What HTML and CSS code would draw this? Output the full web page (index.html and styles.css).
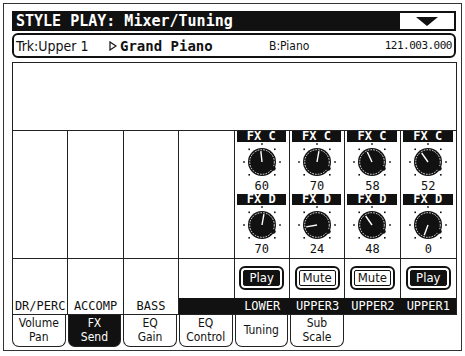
FILE: index.html
```html
<!DOCTYPE html>
<html lang="en">
  <head>
    <meta charset="UTF-8" />
    <meta name="viewport" content="width=device-width, initial-scale=1.0" />
    <title>Style Play: Mixer/Tuning</title>
    <link rel="stylesheet" href="styles.css">
  </head>
  <body>
    <!-- shared knob body -->
    <svg class="defs" width="0" height="0">
      <symbol id="knob" viewBox="0 0 42 38">
        <g fill="#111">
          <rect x="20.2" y="1.2" width="1.6" height="1.6" />
          <rect x="33.0" y="6.5" width="1.6" height="1.6" />
          <rect x="38.2" y="19.2" width="1.6" height="1.6" />
          <rect x="33.0" y="32.0" width="1.6" height="1.6" />
          <rect x="7.4" y="6.5" width="1.6" height="1.6" />
          <rect x="2.2" y="19.2" width="1.6" height="1.6" />
          <rect x="7.4" y="32.0" width="1.6" height="1.6" />
        </g>
        <circle cx="21" cy="20" r="14" fill="#111" />
        <circle cx="21" cy="20" r="12.3" fill="none" stroke="#fff" stroke-width="0.9" stroke-dasharray="1.6 1.2" />
        <circle cx="32.5" cy="26.5" r="2.2" fill="#111" />
      </symbol>
    </svg>

    <div class="frame">
      <!-- Title bar -->
      <div class="title-row">
        <div class="title">STYLE PLAY: Mixer/Tuning</div>
        <div class="menu-btn"><span class="arrow"></span></div>
      </div>

      <!-- Track info -->
      <div class="track">
        <span class="trk">Trk:Upper 1</span>
        <span class="sound">
          <svg class="play-mark" width="8" height="10" viewBox="0 0 8 10">
            <path d="M1 1 L7 5 L1 9 Z" fill="none" stroke="#111" stroke-width="1.2" />
          </svg>Grand Piano</span>
        <span class="bank">B:Piano</span>
        <span class="prog">121.003.000</span>
      </div>

      <!-- Mixer -->
      <div class="mixer">
        <div class="blank"></div>
        <div class="channels">
          <div class="ch"></div>
          <div class="ch"></div>
          <div class="ch"></div>
          <div class="ch"></div>
          <div class="ch">
            <div class="fx">FX C</div>
            <svg class="knob" viewBox="0 0 42 38"><use href="#knob" /><line x1="21" y1="20" x2="21" y2="9" transform="rotate(-6 21 20)" /></svg>
            <div class="val">60</div>
            <div class="fx">FX D</div>
            <svg class="knob" viewBox="0 0 42 38"><use href="#knob" /><line x1="21" y1="20" x2="21" y2="9" transform="rotate(10 21 20)" /></svg>
            <div class="val">70</div>
          </div>
          <div class="ch">
            <div class="fx">FX C</div>
            <svg class="knob" viewBox="0 0 42 38"><use href="#knob" /><line x1="21" y1="20" x2="21" y2="9" transform="rotate(10 21 20)" /></svg>
            <div class="val">70</div>
            <div class="fx">FX D</div>
            <svg class="knob" viewBox="0 0 42 38"><use href="#knob" /><line x1="21" y1="20" x2="21" y2="9" transform="rotate(-100 21 20)" /></svg>
            <div class="val">24</div>
          </div>
          <div class="ch">
            <div class="fx">FX C</div>
            <svg class="knob" viewBox="0 0 42 38"><use href="#knob" /><line x1="21" y1="20" x2="21" y2="9" transform="rotate(-25 21 20)" /></svg>
            <div class="val">58</div>
            <div class="fx">FX D</div>
            <svg class="knob" viewBox="0 0 42 38"><use href="#knob" /><line x1="21" y1="20" x2="21" y2="9" transform="rotate(-35 21 20)" /></svg>
            <div class="val">48</div>
          </div>
          <div class="ch last">
            <div class="fx">FX C</div>
            <svg class="knob" viewBox="0 0 42 38"><use href="#knob" /><line x1="21" y1="20" x2="21" y2="9" transform="rotate(-35 21 20)" /></svg>
            <div class="val">52</div>
            <div class="fx">FX D</div>
            <svg class="knob" viewBox="0 0 42 38"><use href="#knob" /><line x1="21" y1="20" x2="21" y2="9" transform="rotate(-160 21 20)" /></svg>
            <div class="val">0</div>
          </div>

          <!-- play / mute row -->
          <div class="btn-cell"></div>
          <div class="btn-cell"></div>
          <div class="btn-cell"></div>
          <div class="btn-cell"></div>
          <div class="btn-cell"><div class="pm play"><span>Play</span></div></div>
          <div class="btn-cell"><div class="pm mute"><span>Mute</span></div></div>
          <div class="btn-cell"><div class="pm mute"><span>Mute</span></div></div>
          <div class="btn-cell last"><div class="pm play"><span>Play</span></div></div>

          <!-- channel names -->
          <div class="name">DR/PERC</div>
          <div class="name">ACCOMP</div>
          <div class="name">BASS</div>
          <div class="name dark"></div>
          <div class="name dark">LOWER</div>
          <div class="name dark">UPPER3</div>
          <div class="name dark">UPPER2</div>
          <div class="name dark">UPPER1</div>
        </div>
      </div>

      <!-- Page tabs -->
      <div class="tabs">
        <div class="tab">Volume<br>Pan</div>
        <div class="tab active">FX<br>Send</div>
        <div class="tab">EQ<br>Gain</div>
        <div class="tab">EQ<br>Control</div>
        <div class="tab single">Tuning</div>
        <div class="tab">Sub<br>Scale</div>
      </div>
    </div>
  </body>
</html>
```

FILE: styles.css
```css
body {
  margin: 0;
  background: #fff;
  color: #111;
  font-family: "DejaVu Sans Condensed", "Liberation Sans Narrow", "Liberation Sans", sans-serif;
}

.defs {
  position: absolute;
  width: 0;
  height: 0;
}

/* Outer display frame */
.frame {
  box-sizing: border-box;
  width: 459px;
  height: 348px;
  margin: 3px 0 0 3px;
  padding: 7px 4px 0 8px;
  border: 1px solid #333;
}

/* Title bar */
.title-row {
  display: flex;
  height: 20px;
}
.title {
  flex: 1;
  background: #111;
  color: #fff;
  font-family: "DejaVu Sans Mono", monospace;
  font-weight: bold;
  font-size: 15px;
  line-height: 20px;
  padding-left: 4px;
}
.menu-btn {
  box-sizing: border-box;
  width: 58px;
  margin-right: 1px;
  border: 2px solid #111;
  display: flex;
  align-items: center;
  justify-content: center;
}
.arrow {
  width: 0;
  height: 0;
  border-left: 11px solid transparent;
  border-right: 11px solid transparent;
  border-top: 9px solid #111;
}

/* Track info row */
.track {
  box-sizing: border-box;
  display: flex;
  align-items: center;
  height: 25px;
  margin: 2px 1px 0 0;
  padding: 0 2px 0 2px;
  border: 2px solid #111;
  border-radius: 6px;
}
.trk {
  flex: 0 0 93px;
  font-size: 14px;
}
.sound {
  flex: 0 0 160px;
  display: flex;
  align-items: center;
  font-family: "DejaVu Sans Mono", monospace;
  font-weight: bold;
  font-size: 14px;
}
.play-mark {
  margin-right: 3px;
}
.bank {
  flex: 1;
  font-size: 12px;
}
.prog {
  font-family: "DejaVu Sans Mono", monospace;
  font-size: 11px;
  letter-spacing: -0.5px;
}

/* Mixer area */
.mixer {
  margin-top: 4px;
  border: 1px solid #222;
}
.blank {
  height: 67px;
  border-bottom: 1px solid #222;
}
.channels {
  display: grid;
  grid-template-columns: repeat(8, 1fr);
  grid-template-rows: 128px 39px 16px;
}
.ch {
  display: flex;
  flex-direction: column;
  align-items: center;
  border-right: 1px solid #222;
  border-bottom: 1px solid #222;
}
.ch.last,
.btn-cell.last {
  border-right: none;
}
.fx {
  align-self: stretch;
  margin: 0 3px 0 2px;
  height: 11px;
  background: #111;
  color: #fff;
  text-align: center;
  font-family: "DejaVu Sans Mono", monospace;
  font-weight: bold;
  font-size: 12px;
  line-height: 11px;
}
.fx ~ .fx {
  margin-top: 2px;
}
.knob {
  width: 42px;
  height: 38px;
}
.knob line {
  stroke: #fff;
  stroke-width: 1.4;
}
.val {
  font-family: "DejaVu Sans Mono", monospace;
  font-size: 12px;
  line-height: 12px;
}

.btn-cell {
  display: flex;
  align-items: center;
  justify-content: center;
  border-right: 1px solid #222;
}
.pm {
  box-sizing: border-box;
  width: 45px;
  height: 24px;
  padding: 2px;
  border: 2px solid #111;
  border-radius: 6px;
  display: flex;
  margin-top: -2px;
}
.pm span {
  flex: 1;
  display: flex;
  align-items: center;
  justify-content: center;
  border: 1px solid #111;
  border-radius: 2px;
  font-size: 13px;
}
.pm.play span {
  background: #111;
  color: #fff;
}

.name {
  border-right: 1px solid #222;
  font-family: "DejaVu Sans Mono", monospace;
  font-size: 12px;
  line-height: 16px;
  text-align: center;
}
.name.dark {
  background: #111;
  color: #fff;
  border-right: none;
}

/* Page tabs */
.tabs {
  display: grid;
  grid-template-columns: repeat(8, 1fr);
}
.tab {
  box-sizing: border-box;
  height: 32px;
  margin-right: 2px;
  border: 1px solid #222;
  border-top: none;
  border-radius: 0 0 7px 7px;
  text-align: center;
  font-size: 12px;
  line-height: 14px;
  padding-top: 1px;
}
.tab.active {
  background: #111;
  color: #fff;
}
.tab.single {
  padding-top: 8px;
}
```
